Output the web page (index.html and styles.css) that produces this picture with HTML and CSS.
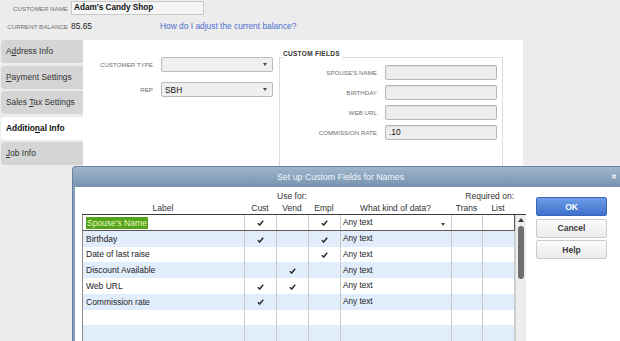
FILE: index.html
```html
<!DOCTYPE html>
<html lang="en">

<head>
    <meta charset="UTF-8">
    <title>Customer - Additional Info</title>
    <link rel="stylesheet" href="styles.css">
</head>

<body>
    <div class="top">
        <div class="top-row">
            <span class="cap">CUSTOMER NAME</span>
            <div class="name-box">Adam's Candy Shop</div>
        </div>
        <div class="top-row bal-row">
            <span class="cap">CURRENT BALANCE</span>
            <span class="bal">85.65</span>
            <a href="#" class="help-link">How do I adjust the current balance?</a>
        </div>
    </div>

    <div class="main">
        <ul class="tabs">
            <li class="tab">A<u>d</u>dress Info</li>
            <li class="tab"><u>P</u>ayment Settings</li>
            <li class="tab">Sales <u>T</u>ax Settings</li>
            <li class="tab active">Additio<u>n</u>al Info</li>
            <li class="tab"><u>J</u>ob Info</li>
        </ul>

        <div class="panel">
            <div class="basic">
                <span class="cap">CUSTOMER TYPE</span>
                <div class="select"><span></span><i class="arrow"></i></div>
                <span class="cap">REP</span>
                <div class="select"><span>SBH</span><i class="arrow"></i></div>
            </div>

            <fieldset class="custom">
                <legend>CUSTOM FIELDS</legend>
                <div class="custom-grid">
                    <span class="cap">SPOUSE'S NAME</span>
                    <div class="input"></div>
                    <span class="cap">BIRTHDAY</span>
                    <div class="input"></div>
                    <span class="cap">WEB URL</span>
                    <div class="input"></div>
                    <span class="cap">COMMISSION RATE</span>
                    <div class="input">.10</div>
                </div>
            </fieldset>
        </div>
    </div>

    <!-- modal window over the customer form -->
    <div class="dialog">
        <div class="dialog-title">
            <span>Set up Custom Fields for Names</span>
            <span class="close">&#x2715;</span>
        </div>
        <div class="dialog-body">
            <div class="grid">
                <table class="cf-head">
                    <colgroup>
                        <col class="c-label"><col class="c-chk"><col class="c-chk"><col class="c-chk">
                        <col class="c-kind"><col class="c-req"><col class="c-chk">
                    </colgroup>
                    <tr>
                        <th></th>
                        <th colspan="3">Use for:</th>
                        <th></th>
                        <th colspan="2" class="right">Required on:</th>
                    </tr>
                    <tr>
                        <th>Label</th>
                        <th>Cust</th>
                        <th>Vend</th>
                        <th>Empl</th>
                        <th>What kind of data?</th>
                        <th>Trans</th>
                        <th>List</th>
                    </tr>
                </table>

                <div class="cf-body">
                    <table class="cf-rows">
                        <colgroup>
                            <col class="c-label"><col class="c-chk"><col class="c-chk"><col class="c-chk">
                            <col class="c-kind"><col class="c-req"><col class="c-chk">
                        </colgroup>
                        <tr class="sel">
                            <td><span class="hl">Spouse's Name</span></td>
                            <td class="chk"><svg width="7" height="6" viewBox="0 0 7 6"><path d="M0.8 3.2 L2.7 5 L6.2 0.8" /></svg></td>
                            <td></td>
                            <td class="chk"><svg width="7" height="6" viewBox="0 0 7 6"><path d="M0.8 3.2 L2.7 5 L6.2 0.8" /></svg></td>
                            <td class="kind">Any text<i class="arrow"></i></td>
                            <td></td>
                            <td></td>
                        </tr>
                        <tr>
                            <td>Birthday</td>
                            <td class="chk"><svg width="7" height="6" viewBox="0 0 7 6"><path d="M0.8 3.2 L2.7 5 L6.2 0.8" /></svg></td>
                            <td></td>
                            <td class="chk"><svg width="7" height="6" viewBox="0 0 7 6"><path d="M0.8 3.2 L2.7 5 L6.2 0.8" /></svg></td>
                            <td class="kind">Any text</td>
                            <td></td>
                            <td></td>
                        </tr>
                        <tr>
                            <td>Date of last raise</td>
                            <td></td>
                            <td></td>
                            <td class="chk"><svg width="7" height="6" viewBox="0 0 7 6"><path d="M0.8 3.2 L2.7 5 L6.2 0.8" /></svg></td>
                            <td class="kind">Any text</td>
                            <td></td>
                            <td></td>
                        </tr>
                        <tr>
                            <td>Discount Available</td>
                            <td></td>
                            <td class="chk"><svg width="7" height="6" viewBox="0 0 7 6"><path d="M0.8 3.2 L2.7 5 L6.2 0.8" /></svg></td>
                            <td></td>
                            <td class="kind">Any text</td>
                            <td></td>
                            <td></td>
                        </tr>
                        <tr>
                            <td>Web URL</td>
                            <td class="chk"><svg width="7" height="6" viewBox="0 0 7 6"><path d="M0.8 3.2 L2.7 5 L6.2 0.8" /></svg></td>
                            <td class="chk"><svg width="7" height="6" viewBox="0 0 7 6"><path d="M0.8 3.2 L2.7 5 L6.2 0.8" /></svg></td>
                            <td></td>
                            <td class="kind">Any text</td>
                            <td></td>
                            <td></td>
                        </tr>
                        <tr>
                            <td>Commission rate</td>
                            <td class="chk"><svg width="7" height="6" viewBox="0 0 7 6"><path d="M0.8 3.2 L2.7 5 L6.2 0.8" /></svg></td>
                            <td></td>
                            <td></td>
                            <td class="kind">Any text</td>
                            <td></td>
                            <td></td>
                        </tr>
                        <tr><td></td><td></td><td></td><td></td><td></td><td></td><td></td></tr>
                        <tr><td></td><td></td><td></td><td></td><td></td><td></td><td></td></tr>
                    </table>
                    <div class="scroll">
                        <i class="up"></i>
                        <div class="thumb"></div>
                    </div>
                </div>
            </div>

            <div class="buttons">
                <button class="btn primary">OK</button>
                <button class="btn">Cancel</button>
                <button class="btn">Help</button>
            </div>
        </div>
    </div>
</body>

</html>
```

FILE: styles.css
```css
* {
    box-sizing: border-box;
}

html,
body {
    margin: 0;
    padding: 0;
    overflow: hidden;
    background-color: #ececec;
    font-family: "Liberation Sans", Arial, sans-serif;
    font-size: 8.4px;
    color: #222222;
}

/* header: name and balance */
.top {
    height: 40px;
    padding-top: 1px;
}

.top-row {
    display: flex;
    align-items: center;
    height: 14px;
}

.bal-row {
    margin-top: 4px;
}

.cap {
    font-size: 6.2px;
    color: #707070;
    text-align: right;
    white-space: nowrap;
}

.top-row .cap {
    width: 68px;
    margin-right: 3px;
}

.name-box {
    width: 133px;
    height: 14px;
    border: 1px solid #c9c9c9;
    background-color: #f6f6f6;
    padding-left: 2px;
    line-height: 12px;
    font-size: 8.2px;
    font-weight: bold;
    color: #111111;
}

.bal {
    width: 89px;
    color: #222222;
}

.help-link {
    color: #4b6fd0;
    text-decoration: none;
}

/* tabs + panel */
.main {
    display: flex;
    height: 170px;
}

.tabs {
    list-style: none;
    margin: 0;
    padding: 0 0 0 1px;
    width: 83px;
    display: flex;
    flex-direction: column;
    gap: 2.5px;
}

.tab {
    height: 23px;
    line-height: 23px;
    padding-left: 5px;
    background-color: #d5d5d5;
    border-radius: 4px 0 0 4px;
    color: #333333;
    white-space: nowrap;
}

.tab.active {
    background-color: #ffffff;
    font-weight: bold;
    color: #111111;
}

.panel {
    width: 440px;
    background-color: #ffffff;
    display: flex;
    align-items: flex-start;
}

.basic {
    display: grid;
    grid-template-columns: 70px 112px;
    column-gap: 8px;
    row-gap: 10px;
    align-items: center;
    margin-top: 17px;
}

.select {
    height: 15px;
    border: 1px solid #bababa;
    border-radius: 2px;
    background-color: #efefef;
    display: flex;
    align-items: center;
    justify-content: space-between;
    padding: 0 5px 0 3px;
    color: #111111;
}

.arrow {
    display: inline-block;
    width: 0;
    height: 0;
    border-left: 2.5px solid transparent;
    border-right: 2.5px solid transparent;
    border-top: 3px solid #444444;
}

.custom {
    margin: 10px 0 0 6px;
    padding: 1px 0 0 0;
    width: 224px;
    height: 130px;
    border: 1px solid #dddddd;
    border-radius: 1px;
}

.custom legend {
    margin-left: 3px;
    padding: 0 2px 7px 0;
    font-size: 6.5px;
    line-height: 7px;
    font-weight: bold;
    letter-spacing: 0.3px;
    color: #333333;
}

.custom-grid {
    display: grid;
    grid-template-columns: 97px 112px;
    column-gap: 8px;
    row-gap: 5px;
    align-items: center;
}

.input {
    height: 15px;
    border: 1px solid #b7b7b7;
    border-radius: 2px;
    background-color: #eeeeee;
    box-shadow: inset 0 1px 1px rgba(0, 0, 0, 0.07);
    padding-left: 3px;
    line-height: 13px;
    color: #111111;
}

/* dialog window */
.dialog {
    position: absolute;
    left: 72px;
    top: 166px;
    width: 548px;
    height: 175px;
    border: 1px solid #6783a0;
    border-right: 0;
    border-bottom: 0;
    border-radius: 4px 0 0 0;
    background-color: #86a1bb;
    overflow: hidden;
}

.dialog-title {
    height: 20px;
    display: flex;
    align-items: center;
    justify-content: space-between;
    padding: 0 3px 0 204px;
    background: linear-gradient(#9fb6cb, #7793b0);
    color: #f4f7fa;
    font-size: 8.8px;
}

.close {
    font-size: 7px;
    font-weight: bold;
}

.dialog-body {
    margin-left: 2px;
    height: 154px;
    background-color: #ffffff;
    display: flex;
    align-items: flex-start;
}

.grid {
    margin: 3px 0 0 7px;
    width: 444px;
}

table {
    table-layout: fixed;
    border-collapse: collapse;
    width: 432px;
}

.c-label {
    width: 162px;
}

.c-chk {
    width: 32px;
}

.c-kind {
    width: 111px;
}

.c-req {
    width: 31px;
}

.cf-head th {
    height: 12px;
    padding: 0;
    font-weight: normal;
    font-size: 8.5px;
    color: #333333;
    text-align: center;
    white-space: nowrap;
}

.cf-head th.right {
    text-align: right;
}

.cf-body {
    display: flex;
    border-top: 1px solid #3a3a3a;
}

.cf-rows {
    border-left: 1px solid #8c8c8c;
}

.cf-rows tr {
    height: 15.75px;
}

.cf-rows tr:nth-child(even) {
    background-color: #e2edfc;
}

.cf-rows td {
    padding: 0 0 0 3px;
    border-right: 1px solid #cacaca;
    font-size: 8.5px;
    color: #222222;
    white-space: nowrap;
    overflow: hidden;
}

.cf-rows tr.sel td {
    border-bottom: 1px solid #5a5a5a;
}

.cf-rows tr.sel td:last-child {
    border-right-color: #5a5a5a;
}

.cf-rows td.chk {
    padding: 0;
    text-align: center;
}

.chk svg {
    display: inline-block;
    vertical-align: middle;
}

.chk path {
    fill: none;
    stroke: #2b2b2b;
    stroke-width: 1.5;
}

.cf-rows td.kind {
    padding-left: 2px;
    font-size: 8.2px;
    color: #1a1a1a;
}

.kind .arrow {
    float: right;
    margin: 5px 6px 0 0;
}

.hl {
    display: inline-block;
    background-color: #55a31b;
    color: #e2f7bd;
    padding: 0 1px;
    line-height: 12px;
}

.scroll {
    width: 12px;
    background-color: #ededed;
    border-left: 1px solid #d2d2d2;
    display: flex;
    flex-direction: column;
    align-items: center;
}

.up {
    margin-top: 3px;
    width: 0;
    height: 0;
    border-left: 3px solid transparent;
    border-right: 3px solid transparent;
    border-bottom: 4px solid #3a3a3a;
}

.thumb {
    margin-top: 4px;
    width: 6px;
    height: 53px;
    background-color: #6f6f6f;
    border-radius: 3px;
}

.buttons {
    margin: 10px 0 0 10px;
    display: flex;
    flex-direction: column;
    gap: 2.5px;
}

.btn {
    width: 71px;
    height: 19px;
    padding: 0;
    border: 1px solid #cbcbcb;
    border-radius: 2px;
    background: linear-gradient(#fbfbfb, #ebebeb);
    font-family: inherit;
    font-size: 8.5px;
    font-weight: bold;
    color: #3d3d3d;
}

.btn.primary {
    background: linear-gradient(#6c9de7, #3f70cc);
    border-color: #3b65b8;
    color: #ffffff;
}
```
